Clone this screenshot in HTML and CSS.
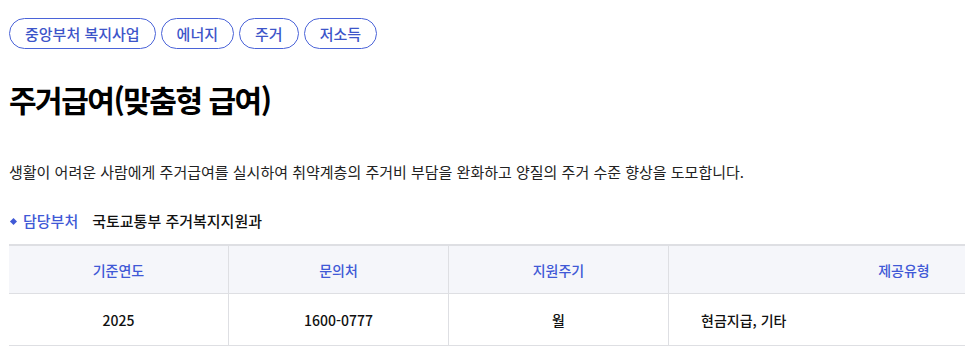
FILE: index.html
```html
<!DOCTYPE html>
<html lang="ko">

<head>
    <meta charset="UTF-8">
    <meta name="viewport" content="width=device-width, initial-scale=1.0">
    <title>주거급여</title>
    <link rel="stylesheet" href="styles.css">
</head>

<body>
    <div class="page">
        <!--태그 목록-->
        <div class="tags">
            <span class="tag">중앙부처 복지사업</span>
            <span class="tag">에너지</span>
            <span class="tag">주거</span>
            <span class="tag">저소득</span>
        </div>
        <h1 class="title">주거급여(맞춤형 급여)</h1>
        <p class="desc">생활이 어려운 사람에게 주거급여를 실시하여 취약계층의 주거비 부담을 완화하고 양질의 주거 수준 향상을 도모합니다.</p>
        <div class="dept">
            <span class="dept-label">담당부처</span>
            <span class="dept-value">국토교통부 주거복지지원과</span>
        </div>
        <table class="info">
            <thead>
                <tr>
                    <th>기준연도</th>
                    <th>문의처</th>
                    <th>지원주기</th>
                    <th class="wide">제공유형</th>
                </tr>
            </thead>
            <tbody>
                <tr>
                    <td>2025</td>
                    <td>1600-0777</td>
                    <td>월</td>
                    <td class="left">현금지급, 기타</td>
                </tr>
            </tbody>
        </table>
    </div>
</body>

</html>
```

FILE: styles.css
```css
body {
    font-family: "Noto Sans CJK KR", "Noto Sans", sans-serif;
    margin: 0;
    padding: 0;
    background-color: #fff;
    color: #111;
    overflow: hidden;
}

.page {
    padding: 18px 9px 0;
}

.tags {
    display: flex;
    gap: 5px;
}

.tag {
    display: flex;
    align-items: center;
    height: 29px;
    padding: 0 15px;
    border: 1px solid #4a63d8;
    border-radius: 16px;
    color: #3d55c9;
    font-size: 15px;
    font-weight: 500;
}

.title {
    margin: 30px 0 0;
    font-size: 30px;
    font-weight: 700;
    line-height: 40px;
    letter-spacing: -1.5px;
    color: #000;
}

.desc {
    margin: 42px 0 0;
    font-size: 15px;
    line-height: 22px;
    color: #222;
}

.dept {
    display: flex;
    align-items: center;
    margin-top: 27px;
    font-size: 15px;
    line-height: 22px;
}

.dept-label {
    position: relative;
    padding-left: 14px;
    color: #4059d6;
    font-weight: 500;
}

.dept-label::before {
    content: "";
    position: absolute;
    left: 2px;
    top: 9px;
    width: 5px;
    height: 5px;
    background-color: #4059d6;
    transform: rotate(45deg);
}

.dept-value {
    margin-left: 14px;
    font-weight: 500;
    color: #111;
}

.info {
    margin-top: 12px;
    width: 1130px;
    border-collapse: collapse;
    table-layout: fixed;
    font-size: 14px;
}

.info th,
.info td {
    width: 219px;
    padding: 0;
    border: 1px solid #dedfe3;
    border-left: none;
    text-align: center;
}

.info th:last-child,
.info td:last-child {
    border-right: none;
}

.info th.wide {
    width: auto;
}

.info th {
    height: 47px;
    background-color: #f5f6fa;
    color: #4059d6;
    font-weight: 500;
    border-top: 2px solid #dedfe3;
}

.info td {
    height: 51px;
    font-weight: 500;
    color: #111;
}

.info td.left {
    text-align: left;
    padding-left: 32px;
}
```
